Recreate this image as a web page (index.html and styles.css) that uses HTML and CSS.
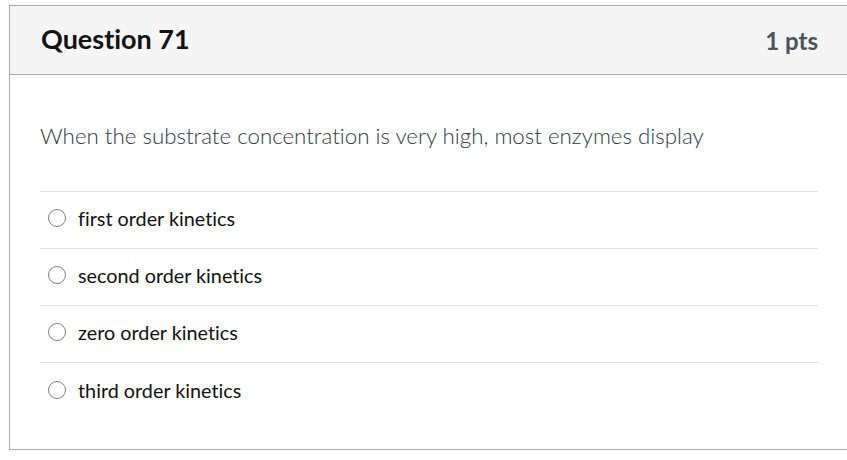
FILE: index.html
```html
<!DOCTYPE html>
<html>
<head>
<meta charset="utf-8">
<link rel="stylesheet" href="styles.css">
</head>
<body>
<div class="card">
  <div class="header">
    <div class="title">Question 71</div>
    <div class="pts">1 pts</div>
  </div>
  <div class="body">
    <div class="question">When the substrate concentration is very high, most enzymes display</div>
    <div class="answers">
      <label class="answer"><span class="radio"></span><span class="label">first order kinetics</span></label>
      <label class="answer"><span class="radio"></span><span class="label">second order kinetics</span></label>
      <label class="answer"><span class="radio"></span><span class="label">zero order kinetics</span></label>
      <label class="answer"><span class="radio"></span><span class="label">third order kinetics</span></label>
    </div>
  </div>
</div>
</body>
</html>
```
FILE: styles.css
```css
html, body {
  margin: 0;
  padding: 0;
  background: #fff;
  overflow: hidden;
}
body {
  font-family: Lato, "Liberation Sans", sans-serif;
  font-variant-ligatures: none;
  color: #2d3b45;
  padding: 5px 0 0 9px;
}
.card {
  width: 860px;
  height: 445px;
  box-sizing: border-box;
  border: 1px solid #a9a9a9;
  border-right: none;
  display: flex;
  flex-direction: column;
}
.header {
  height: 69px;
  flex: none;
  box-sizing: border-box;
  background: #f5f5f5;
  border-bottom: 1px solid #a9a9a9;
  display: flex;
  align-items: center;
  justify-content: space-between;
  padding: 0 0 4px 31px;
  width: 838px;
}
.title {
  font-size: 27px;
  font-weight: 700;
  color: #111;
}
.pts {
  font-size: 24px;
  font-weight: 700;
  color: #4b545b;
  margin-right: 30px;
  margin-top: 4px;
}
.body {
  padding: 47px 0 0 30px;
  width: 778px;
}
.question {
  font-size: 22.3px;
  line-height: 28px;
  font-weight: 300;
  color: #2d3b45;
  margin-bottom: 41px;
}
.answers {
  border-top: 1px solid #e0e0e0;
}
.answer {
  display: flex;
  align-items: center;
  height: 57px;
  box-sizing: border-box;
  padding-bottom: 4px;
  border-bottom: 1px solid #e0e0e0;
  padding-left: 8px;
}
.answer:last-child {
  border-bottom: none;
}
.radio {
  width: 18px;
  height: 18px;
  box-sizing: border-box;
  border: 1.5px solid #808080;
  border-radius: 50%;
  margin-right: 12px;
  flex: none;
}
.label {
  font-size: 19.8px;
  color: #111;
}
```
